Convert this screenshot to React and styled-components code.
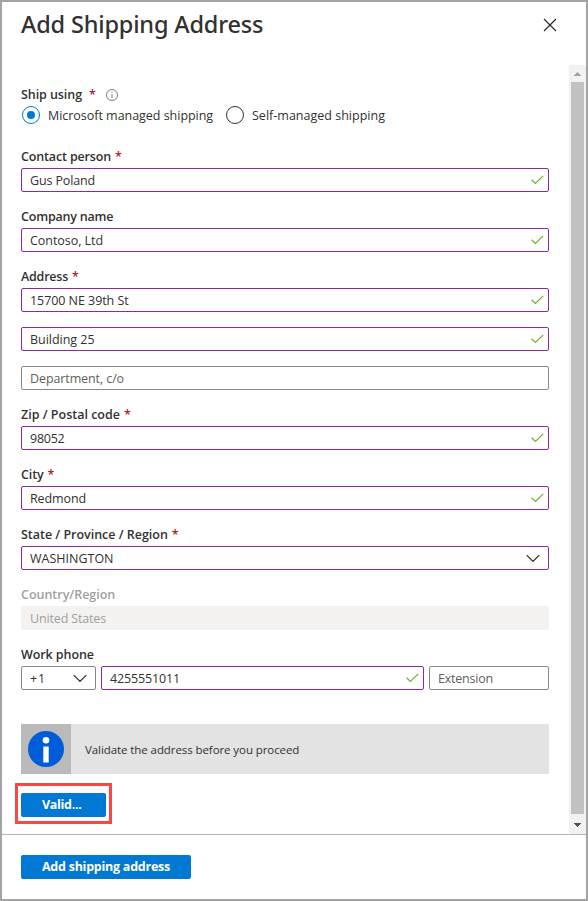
import React from 'react';
import styled, { createGlobalStyle } from 'styled-components';

const Global = createGlobalStyle`
  *, *::before, *::after { box-sizing: border-box; }
  body { margin: 0; background: #fff; }
`;

const Panel = styled.section`
  width: 588px;
  height: 901px;
  border: 2px solid #a3a3a3;
  background: #fff;
  display: flex;
  flex-direction: column;
  font-family: 'Open Sans', 'Noto Sans', sans-serif;
  font-size: 12.5px;
  line-height: 18px;
  color: #323130;
  white-space: nowrap;
`;

const Text = styled.span`
  letter-spacing: ${(p) => p.$track || 0}px;
`;

const Header = styled.header`
  height: 63px;
  flex: none;
  display: flex;
  justify-content: space-between;
  align-items: flex-start;
  padding: 7px 29px 0 19px;
`;

const Title = styled.h1`
  margin: 0;
  font-family: 'Noto Sans', 'Open Sans', sans-serif;
  font-size: 23.5px;
  line-height: 31px;
  font-weight: 500;
  letter-spacing: -0.18px;
`;

const CloseButton = styled.button`
  margin: 9px 0 0;
  padding: 0;
  border: 0;
  background: none;
  width: 14px;
  height: 14px;
  display: flex;
`;

const Body = styled.div`
  height: 769px;
  flex: none;
  display: flex;
`;

const Form = styled.form`
  flex: 1;
  min-width: 0;
  padding: 20px 20px 0 19px;
`;

const Scrollbar = styled.div`
  width: 17px;
  background: #f1f1f1;
  display: flex;
  flex-direction: column;
  align-items: center;
`;

const Arrow = styled.div`
  height: ${(p) => p.$height}px;
  width: 17px;
  padding-top: ${(p) => p.$top}px;
  display: flex;
  justify-content: center;
`;

const Thumb = styled.div`
  width: 13px;
  height: 732px;
  background: #c1c1c1;
`;

const ShipLabel = styled.div`
  display: flex;
  align-items: center;
  height: 18px;
  font-weight: 600;
  & > span {
    padding-top: 2px;
  }
`;

const Star = styled.span`
  color: #a4262c;
  font-weight: 600;
  margin-left: ${(p) => p.$gap || 4}px;
`;

const InfoMark = styled.svg`
  margin-left: 10px;
  margin-top: 2px;
`;

const RadioRow = styled.div`
  display: flex;
  align-items: center;
  height: 20px;
  margin-top: 2px;
  margin-bottom: 22px;
`;

const Radio = styled.span`
  width: 18px;
  height: 18px;
  flex: none;
  border-radius: 50%;
  border: 1px solid ${(p) => (p.$on ? '#0078d4' : '#323130')};
  margin: 0 8px 0 ${(p) => p.$left || 0}px;
  display: flex;
  align-items: center;
  justify-content: center;
  &::after {
    content: '';
    width: 8px;
    height: 8px;
    border-radius: 50%;
    background: ${(p) => (p.$on ? '#0078d4' : 'transparent')};
  }
`;

const RadioText = styled.span`
  width: 165px;
  padding-top: 2px;
  letter-spacing: ${(p) => p.$track}px;
`;

const Field = styled.div`
  margin-bottom: 15px;
`;

const Label = styled.div`
  height: 18px;
  line-height: 20px;
  margin-bottom: 3px;
  font-weight: 600;
  color: ${(p) => (p.$disabled ? '#a19f9d' : '#323130')};
`;

const frames = { valid: '#8a28a3', idle: '#8a8886', disabled: '#f3f2f1' };
const inks = { valid: '#323130', idle: '#323130', disabled: '#a19f9d' };

const Input = styled.div`
  height: 24px;
  width: ${(p) => (p.$width ? `${p.$width}px` : '100%')};
  flex: none;
  border: 1px solid ${(p) => frames[p.$state]};
  border-radius: 2px;
  background: ${(p) => (p.$state === 'disabled' ? '#f3f2f1' : '#fff')};
  color: ${(p) => (p.$hint ? '#605e5c' : inks[p.$state])};
  padding: 0 ${(p) => p.$right || 4}px 0 8px;
  display: flex;
  align-items: center;
  justify-content: space-between;
  & > span {
    padding-top: 2px;
  }
`;

const Stack = styled.div`
  display: flex;
  flex-direction: column;
  gap: 15px;
`;

const PhoneRow = styled.div`
  display: flex;
  gap: 5px;
`;

const Notice = styled.div`
  display: flex;
  height: 50px;
  margin-top: 34px;
  background: #e3e3e3;
  font-size: 11.5px;
`;

const NoticeIcon = styled.div`
  width: 50px;
  height: 50px;
  background: #bababa;
  margin-right: 14px;
  padding: 7px 0 0 7px;
`;

const NoticeText = styled.span`
  line-height: 51px;
  letter-spacing: -0.08px;
`;

const Highlight = styled.div`
  width: 97px;
  height: 41px;
  margin: 9px 0 0 -6px;
  border: 3px solid #fc4547;
  padding: 7px 3px;
`;

const Button = styled.button`
  display: block;
  height: 24px;
  width: ${(p) => p.$width}px;
  border: 0;
  border-radius: 2px;
  padding: 0 0 0 21px;
  background: #0078d4;
  color: #fff;
  font: 700 12.5px/22px 'Open Sans', 'Noto Sans', sans-serif;
  text-align: left;
  letter-spacing: ${(p) => p.$track}px;
`;

const Footer = styled.footer`
  flex: 1;
  border-top: 1px solid #b3b3b3;
  padding: 20px 19px 0;
`;

const Check = () => (
  <svg width="13" height="10" viewBox="0 0 13 10" fill="none">
    <path d="M0.6 4.8L4.4 8.5L12.2 0.9" stroke="#6bb02b" strokeWidth="1.2" />
  </svg>
);

const Chevron = () => (
  <svg width="14" height="9" viewBox="0 0 14 9" fill="none">
    <path d="M0.7 1.2L7 7.5L13.3 1.2" stroke="#292827" strokeWidth="1.2" />
  </svg>
);

const Triangle = ({ up }) => (
  <svg width="7" height="4" viewBox="0 0 7 4" shapeRendering="crispEdges">
    <path d={up ? 'M0 4L3.5 0L7 4Z' : 'M0 0L3.5 4L7 0Z'} fill={up ? '#a3a3a3' : '#505050'} />
  </svg>
);

const LabelRow = ({ text, track, required, disabled }) => (
  <Label $disabled={disabled}>
    <Text $track={track}>{text}</Text>
    {required && <Star>*</Star>}
  </Label>
);

const Value = ({ text, track, state = 'valid' }) => (
  <Input $state={state} $hint={state === 'idle'}>
    <Text $track={track}>{text}</Text>
    {state === 'valid' && <Check />}
  </Input>
);

export default function App() {
  return (
    <>
      <Global />
      <Panel>
        <Header>
          <Title>Add Shipping Address</Title>
          <CloseButton type="button" aria-label="Close">
            <svg width="14" height="14" viewBox="0 0 14 14">
              <path d="M1 1L13 13M13 1L1 13" stroke="#292827" strokeWidth="1.15" />
            </svg>
          </CloseButton>
        </Header>
        <Body>
          <Form>
            <ShipLabel>
              <Text $track={-0.07}>Ship using</Text>
              <Star $gap={7}>*</Star>
              <InfoMark width="12" height="12" viewBox="0 0 12 12">
                <circle cx="6" cy="6" r="5.5" fill="none" stroke="#6e6c6a" strokeWidth="0.9" />
                <path d="M6 5V9.2M6 2.8V4" stroke="#6e6c6a" strokeWidth="0.9" />
              </InfoMark>
            </ShipLabel>
            <RadioRow>
              <Radio $on $left={1} />
              <RadioText $track={-0.03}>Microsoft managed shipping</RadioText>
              <Radio $left={13} />
              <RadioText $track={0.01}>Self-managed shipping</RadioText>
            </RadioRow>
            <Field>
              <LabelRow text="Contact person" track={-0.15} required />
              <Value text="Gus Poland" track={-0.14} />
            </Field>
            <Field>
              <LabelRow text="Company name" track={-0.2} />
              <Value text="Contoso, Ltd" track={-0.05} />
            </Field>
            <Field>
              <LabelRow text="Address" track={-0.22} required />
              <Stack>
                <Value text="15700 NE 39th St" track={-0.06} />
                <Value text="Building 25" track={-0.03} />
                <Value text="Department, c/o" track={-0.1} state="idle" />
              </Stack>
            </Field>
            <Field>
              <LabelRow text="Zip / Postal code" track={0} required />
              <Value text="98052" track={-0.25} />
            </Field>
            <Field>
              <LabelRow text="City" track={-0.13} required />
              <Value text="Redmond" track={-0.11} />
            </Field>
            <Field>
              <LabelRow text="State / Province / Region" track={-0.02} required />
              <Input $state="valid" $right={8}>
                <Text $track={0}>WASHINGTON</Text>
                <Chevron />
              </Input>
            </Field>
            <Field>
              <LabelRow text="Country/Region" track={-0.02} disabled />
              <Value text="United States" track={-0.15} state="disabled" />
            </Field>
            <LabelRow text="Work phone" track={-0.08} />
            <PhoneRow>
              <Input $state="idle" $width={75} $right={8}>
                <Text $track={0.9}>+1</Text>
                <Chevron />
              </Input>
              <Input $state="valid" $width={323}>
                <Text $track={-0.15}>4255551011</Text>
                <Check />
              </Input>
              <Input $state="idle" $hint $width={120}>
                <Text $track={-0.21}>Extension</Text>
              </Input>
            </PhoneRow>
            <Notice>
              <NoticeIcon>
                <svg width="36" height="36" viewBox="0 0 36 36">
                  <circle cx="18" cy="18" r="18" fill="#015cda" />
                  <circle cx="18" cy="9.3" r="3.3" fill="#fff" />
                  <rect x="15.3" y="15.5" width="5.4" height="16" fill="#fff" />
                </svg>
              </NoticeIcon>
              <NoticeText>Validate the address before you proceed</NoticeText>
            </Notice>
            <Highlight>
              <Button type="button" $width={85} $track={-0.3}>Valid...</Button>
            </Highlight>
          </Form>
          <Scrollbar>
            <Arrow $height={17} $top={7}><Triangle up /></Arrow>
            <Thumb />
            <Arrow $height={20} $top={9}><Triangle /></Arrow>
          </Scrollbar>
        </Body>
        <Footer>
          <Button type="button" $width={170} $track={-0.25}>Add shipping address</Button>
        </Footer>
      </Panel>
    </>
  );
}
